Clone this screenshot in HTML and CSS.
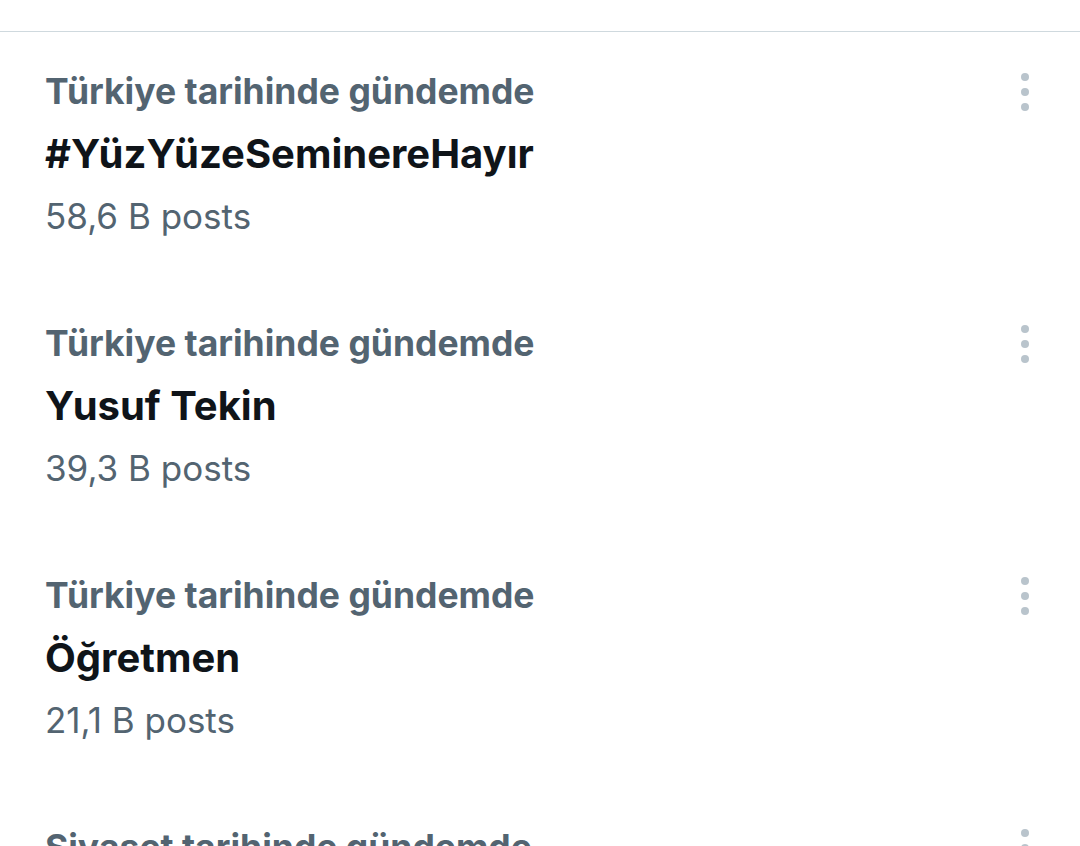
FILE: index.html
```html
<!DOCTYPE html>
<html>
<head>
<meta charset="utf-8">
<link rel="stylesheet" href="styles.css">
</head>
<body>
<div class="topbar"></div>
<div class="list">
  <div class="trend">
    <div class="text">
      <div class="cat">Türkiye tarihinde gündemde</div>
      <div class="title">#YüzYüzeSeminereHayır</div>
      <div class="count">58,6 B posts</div>
    </div>
    <div class="more"><span></span><span></span><span></span></div>
  </div>
  <div class="trend">
    <div class="text">
      <div class="cat">Türkiye tarihinde gündemde</div>
      <div class="title">Yusuf Tekin</div>
      <div class="count">39,3 B posts</div>
    </div>
    <div class="more"><span></span><span></span><span></span></div>
  </div>
  <div class="trend">
    <div class="text">
      <div class="cat">Türkiye tarihinde gündemde</div>
      <div class="title">Öğretmen</div>
      <div class="count">21,1 B posts</div>
    </div>
    <div class="more"><span></span><span></span><span></span></div>
  </div>
  <div class="trend">
    <div class="text">
      <div class="cat">Siyaset tarihinde gündemde</div>
    </div>
    <div class="more"><span></span><span></span><span></span></div>
  </div>
</div>
</body>
</html>
```
FILE: styles.css
```css
html, body {
  margin: 0;
  padding: 0;
  background: #ffffff;
  overflow: hidden;
}
body {
  width: 1080px;
  height: 846px;
  font-family: Inter, "Noto Sans", sans-serif;
}
.list {
  height: 814px;
  overflow: hidden;
}
.topbar {
  height: 31px;
  border-bottom: 1px solid #cfd9de;
}
.trend {
  display: flex;
  justify-content: space-between;
  align-items: flex-start;
  padding: 29px 51px 37px 45px;
  height: 186px;
}
.text {
  display: flex;
  flex-direction: column;
}
.cat, .title, .count {
  line-height: 62px;
  height: 62px;
  white-space: nowrap;
}
.cat {
  font-size: 35.5px;
  font-weight: 700;
  color: #536471;
}
.title {
  font-size: 40px;
  font-weight: 700;
  color: #0f1419;
}
.count {
  font-size: 35px;
  font-weight: 400;
  color: #536471;
}
.more {
  display: flex;
  flex-direction: column;
  gap: 7px;
  padding-top: 12px;
}
.more span {
  width: 8px;
  height: 8px;
  border-radius: 50%;
  background: #b9c4cc;
}
```
